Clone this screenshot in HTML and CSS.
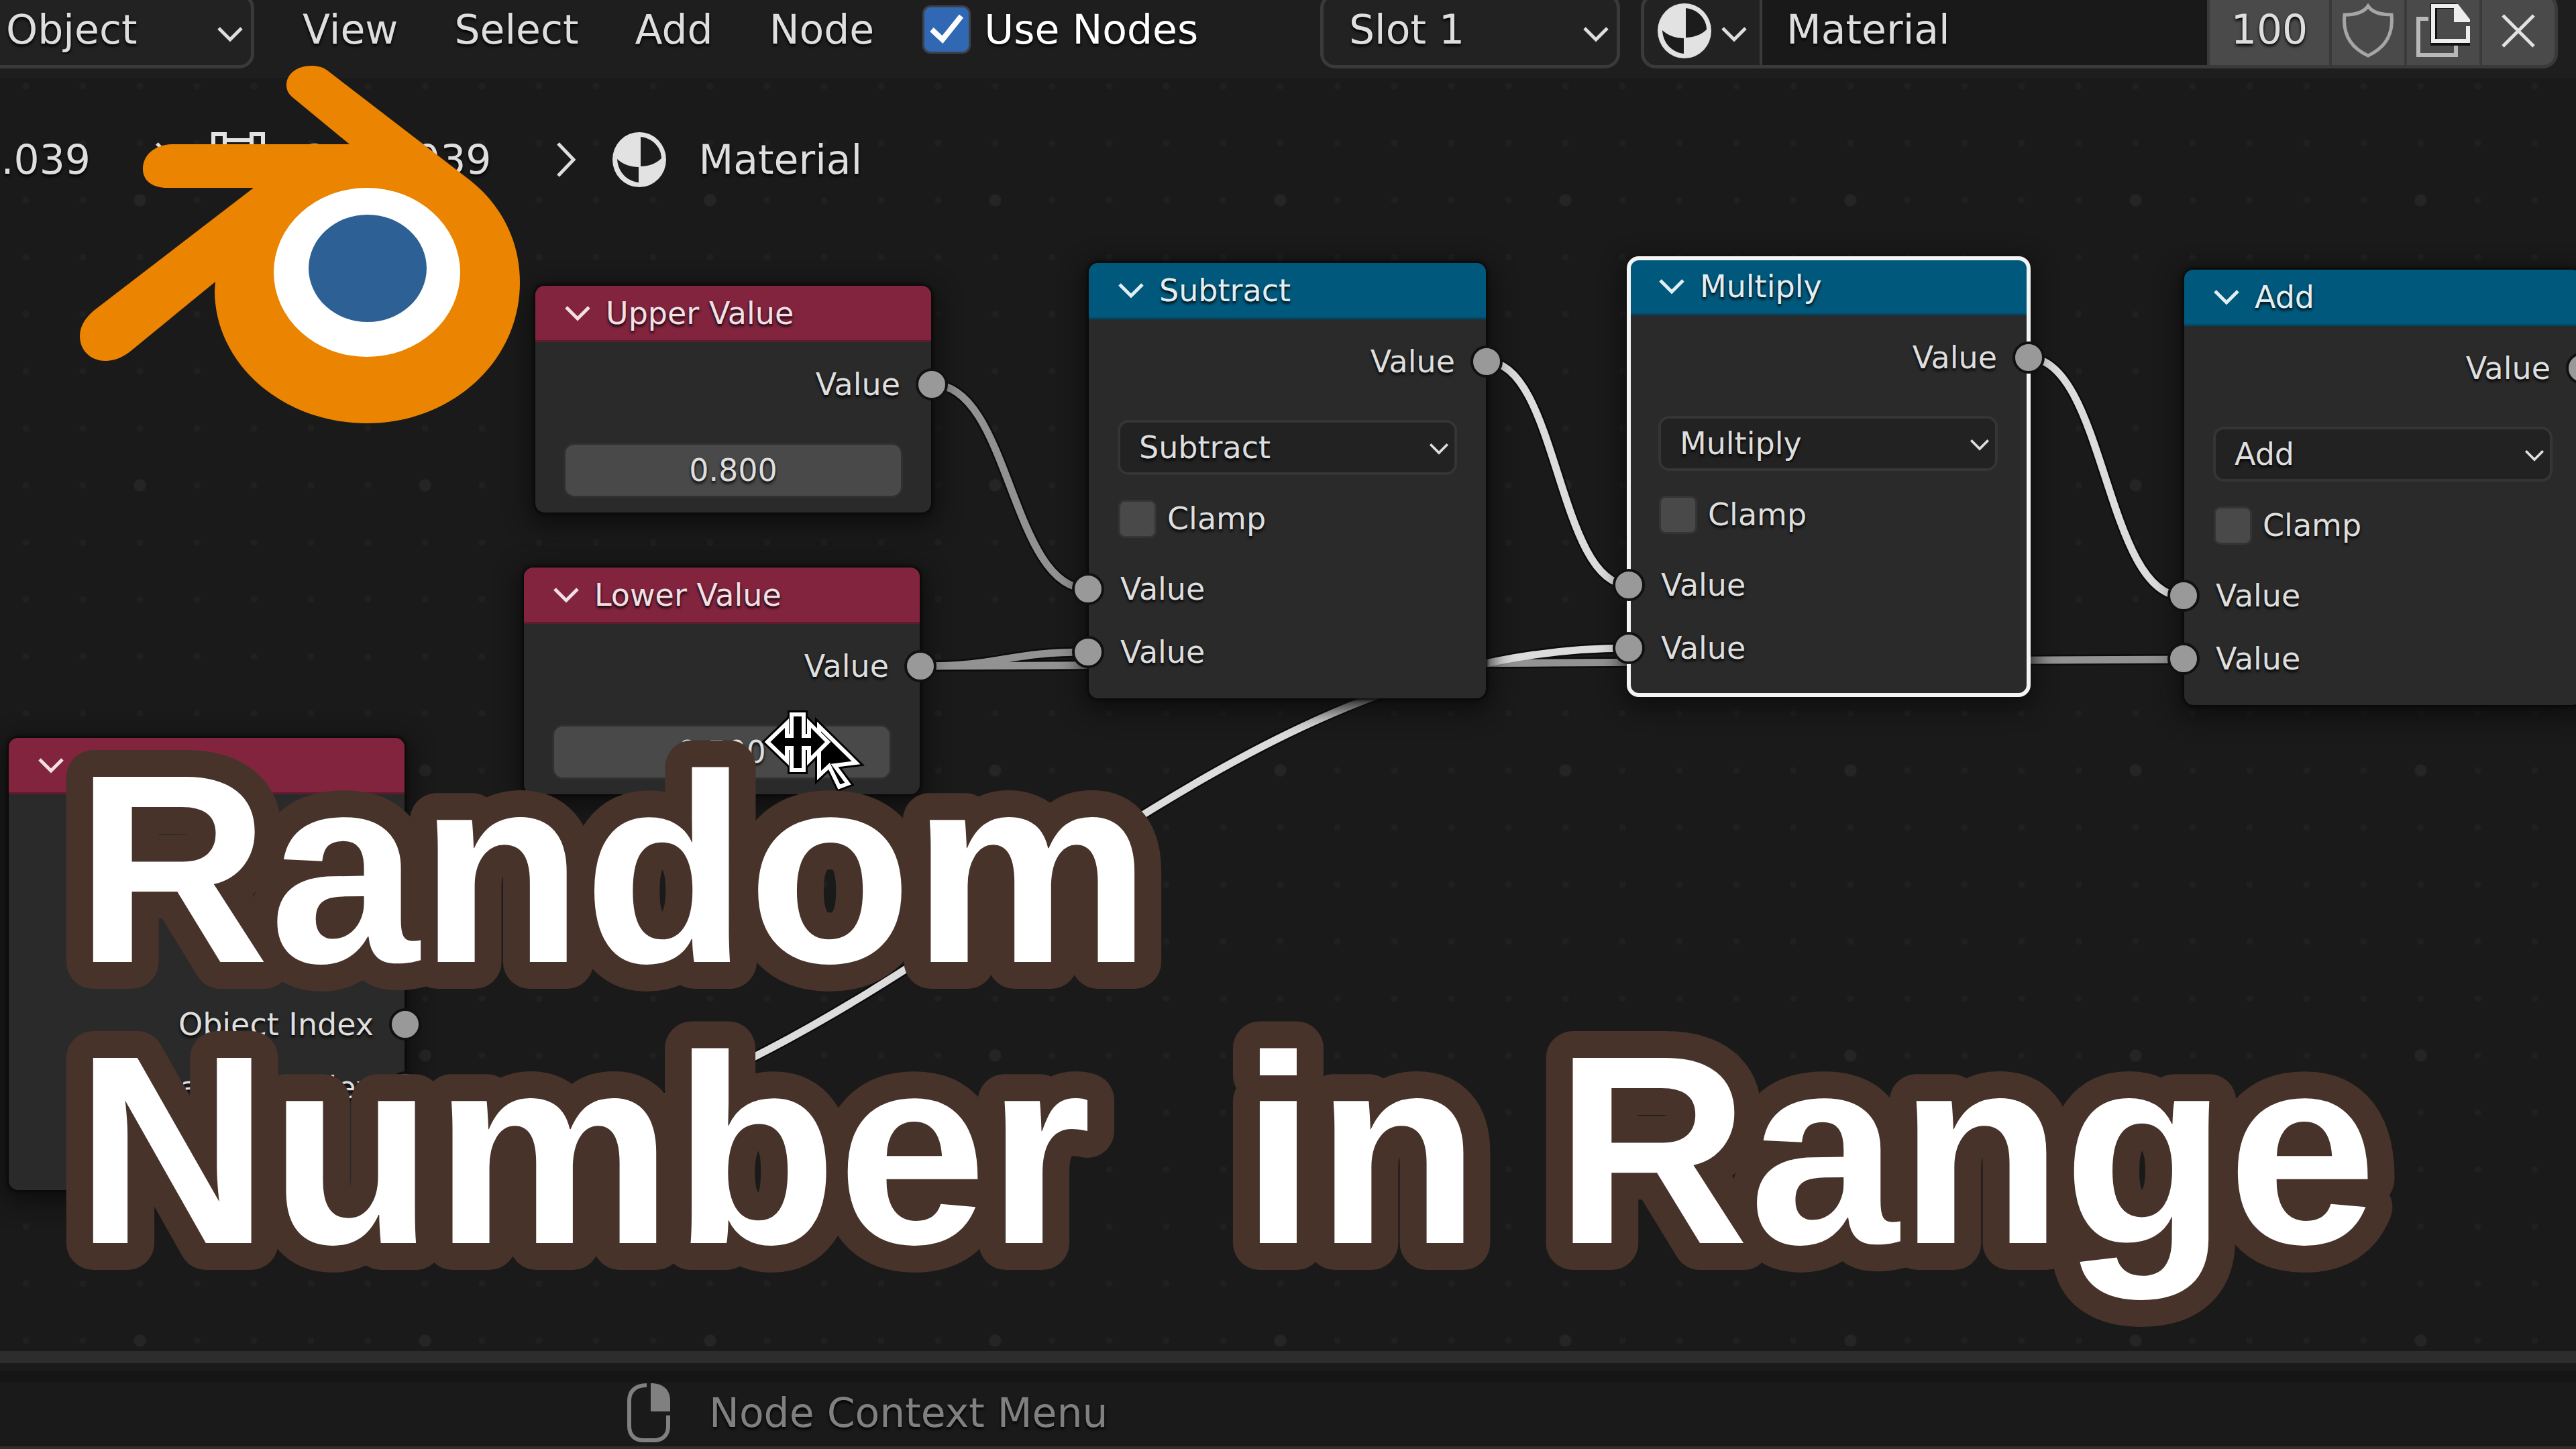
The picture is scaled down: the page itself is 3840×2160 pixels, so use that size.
FILE: index.html
```html
<!DOCTYPE html>
<html lang="en">
<head>
<meta charset="utf-8">
<title>Random Number in Range</title>
<link rel="stylesheet" href="styles.css">
</head>
<body>
<svg class="symbols" aria-hidden="true">
  <symbol id="chevron" viewBox="0 0 40 26"><path d="M3 4 L20 21 L37 4" fill="none" stroke="currentColor" stroke-width="5"/></symbol>
  <symbol id="arrow" viewBox="0 0 30 54"><path d="M3 3 L26 27 L3 51" fill="none" stroke="currentColor" stroke-width="5"/></symbol>
  <symbol id="sphere" viewBox="0 0 80 82">
    <ellipse cx="40" cy="41" rx="40" ry="41" fill="#e2e2e2"/>
    <path d="M42 7 C61 9 73 24 73 39 C65 47 54 51 42 51 Z M7 40 C15 48 27 52 39 52 V75 C21 73 8 59 7 40 Z" fill="#1c1c1c"/>
  </symbol>
</svg>

<main class="editor">
  <header class="toolbar">
    <div class="dropdown mode">
      <select aria-label="Shader type"><option>Object</option></select>
      <svg class="caret"><use href="#chevron"/></svg>
    </div>
    <nav class="menus">
      <button type="button">View</button>
      <button type="button">Select</button>
      <button type="button">Add</button>
      <button type="button">Node</button>
    </nav>
    <label class="use-nodes">
      <span class="tick">
        <input type="checkbox" checked>
        <svg viewBox="0 0 72 72"><path d="M14 36 L30 51 L58 16" fill="none" stroke="#fff" stroke-width="8"/></svg>
      </span>
      Use Nodes
    </label>
    <div class="dropdown slot">
      <select aria-label="Material slot"><option>Slot 1</option></select>
      <svg class="caret"><use href="#chevron"/></svg>
    </div>
    <div class="datablock">
      <button type="button" class="browse" aria-label="Browse material">
        <svg class="ball"><use href="#sphere"/></svg>
        <svg class="caret"><use href="#chevron"/></svg>
      </button>
      <input type="text" class="name" aria-label="Material name" value="Material">
      <button type="button" class="users">100</button>
      <button type="button" class="tool" aria-label="Fake user">
        <svg viewBox="0 0 80 82"><path d="M40 4 C34 13 20 17 5 17 C2 46 14 66 40 78 C66 66 78 46 75 17 C60 17 46 13 40 4 Z" fill="none" stroke="#a6a6a6" stroke-width="5"/></svg>
      </button>
      <button type="button" class="tool" aria-label="New material">
        <svg viewBox="0 0 80 82"><path d="M18 23 H3 V77 H59 V62" fill="none" stroke="#b8b8b8" stroke-width="6"/><path d="M80 34 V58 H26 V3 H60" fill="none" stroke="#111" stroke-width="10"/><path d="M77 34 V56 H25 V4 H60" fill="none" stroke="#ededed" stroke-width="6"/><path d="M56 1 H62 L80 24 V28 H56 Z" fill="#ededed"/></svg>
      </button>
      <button type="button" class="tool" aria-label="Unlink material">
        <svg viewBox="0 0 80 82"><path d="M17 18 L63 64 M63 18 L17 64" fill="none" stroke="#e2e2e2" stroke-width="5"/></svg>
      </button>
    </div>
  </header>

  <section class="canvas">
    <svg class="links">
      <g transform="translate(0 -116)" fill="none">
        <g stroke="#0c0c0c" stroke-width="16">
          <path d="M1373 993 C2095 993 2532 983 3254 983"/>
          <path d="M1373 993 C1497 993 1498 972 1622 972"/>
          <path d="M1390 573 C1506 573 1506 878 1622 878"/>
          <path d="M596 1715 C1296 1715 1722 966 2428 966"/>
          <path d="M2216 539 C2322 539 2322 872 2428 872"/>
          <path d="M3023 533 C3138 533 3138 889 3254 889"/>
        </g>
        <g stroke="#929292" stroke-width="11">
          <path d="M1373 993 C2095 993 2532 983 3254 983"/>
          <path d="M1373 993 C1497 993 1498 972 1622 972"/>
          <path d="M1390 573 C1506 573 1506 878 1622 878"/>
        </g>
        <g stroke="#dcdcdc" stroke-width="11">
          <path d="M596 1715 C1296 1715 1722 966 2428 966"/>
          <path d="M2216 539 C2322 539 2322 872 2428 872"/>
          <path d="M3023 533 C3138 533 3138 889 3254 889"/>
        </g>
      </g>
    </svg>

    <ol class="breadcrumbs">
      <li class="clipped"><span>Cube.039</span></li>
      <li><svg class="step"><use href="#arrow"/></svg>
        <svg class="ball" viewBox="0 0 80 82"><path d="M20 12 H60 M20 70 H60 M11 22 V60 M69 22 V60 M3 3 H20 V22 H3 Z M60 3 H77 V22 H60 Z M3 60 H20 V79 H3 Z M60 60 H77 V79 H60 Z" fill="none" stroke="#e2e2e2" stroke-width="6"/></svg>
        <span>Cube.039</span></li>
      <li><svg class="step"><use href="#arrow"/></svg><svg class="ball"><use href="#sphere"/></svg><span>Material</span></li>
    </ol>

    <article class="node input-node upper">
      <h2><svg class="fold"><use href="#chevron"/></svg>Upper Value</h2>
      <div class="row out">Value<i class="socket"></i></div>
      <input type="text" class="number" aria-label="Upper value" value="0.800">
    </article>

    <article class="node input-node lower">
      <h2><svg class="fold"><use href="#chevron"/></svg>Lower Value</h2>
      <div class="row out">Value<i class="socket"></i></div>
      <input type="text" class="number" aria-label="Lower value" value="0.500">
    </article>

    <article class="node input-node info">
      <h2><svg class="fold"><use href="#chevron"/></svg></h2>
      <div class="row out">Object Index<i class="socket"></i></div>
      <div class="row out">Material Index<i class="socket"></i></div>
    </article>

    <article class="node subtract">
      <h2><svg class="fold"><use href="#chevron"/></svg>Subtract</h2>
      <div class="row out">Value<i class="socket"></i></div>
      <div class="dropdown operation"><select aria-label="Operation"><option>Subtract</option></select><svg class="caret"><use href="#chevron"/></svg></div>
      <label class="row clamp"><input type="checkbox">Clamp</label>
      <div class="row in">Value<i class="socket"></i></div>
      <div class="row in">Value<i class="socket"></i></div>
    </article>

    <article class="node multiply">
      <h2><svg class="fold"><use href="#chevron"/></svg>Multiply</h2>
      <div class="row out">Value<i class="socket"></i></div>
      <div class="dropdown operation"><select aria-label="Operation"><option>Multiply</option></select><svg class="caret"><use href="#chevron"/></svg></div>
      <label class="row clamp"><input type="checkbox">Clamp</label>
      <div class="row in">Value<i class="socket"></i></div>
      <div class="row in">Value<i class="socket"></i></div>
    </article>

    <article class="node add">
      <h2><svg class="fold"><use href="#chevron"/></svg>Add</h2>
      <div class="row out">Value<i class="socket"></i></div>
      <div class="dropdown operation"><select aria-label="Operation"><option>Add</option></select><svg class="caret"><use href="#chevron"/></svg></div>
      <label class="row clamp"><input type="checkbox">Clamp</label>
      <div class="row in">Value<i class="socket"></i></div>
      <div class="row in">Value<i class="socket"></i></div>
    </article>

    <svg class="pointer" viewBox="1130 1050 160 136" aria-hidden="true">
      <g fill="#000" stroke="#000" stroke-width="12">
        <path d="M1221 1083 L1276 1137 L1244 1141 L1264 1168 L1251 1173 L1236 1142 L1221 1156 Z"/>
        <path d="M1144 1106 L1173 1078 V1097 H1180 V1065 H1198 V1097 H1206 V1078 L1234 1106 L1206 1134 V1115 H1198 V1148 H1180 V1115 H1173 V1134 Z"/>
      </g>
      <g fill="#000" stroke="#fff" stroke-width="6">
        <path d="M1221 1083 L1276 1137 L1244 1141 L1264 1168 L1251 1173 L1236 1142 L1221 1156 Z"/>
        <path d="M1144 1106 L1173 1078 V1097 H1180 V1065 H1198 V1097 H1206 V1078 L1234 1106 L1206 1134 V1115 H1198 V1148 H1180 V1115 H1173 V1134 Z"/>
      </g>
    </svg>
  </section>

  <svg class="logo" viewBox="110 90 680 550" role="img" aria-label="Blender">
    <path fill="#eb8400" d="M488 105 L631 215 L701 269 C748 306 775 360 775 421 C775 540 672 631 547 631 C422 631 320 543 320 433 L321 420 L194 524 C182 533 170 538 157 538 C136 538 119 523 119 501 C119 484 130 470 145 459 L378 280 H249 C228 280 213 270 213 252 C213 230 232 215 258 215 H521 L436 145 C430 140 427 134 427 127 C427 110 443 98 464 98 C474 98 481 100 488 105 Z"/>
    <ellipse cx="547" cy="406" rx="139" ry="126" fill="#fff"/>
    <ellipse cx="548" cy="400" rx="88" ry="80" fill="#2d6094"/>
  </svg>

  <h1 class="headline">
    <svg>
      <text x="0" y="350">Random</text>
      <text x="0" y="769">Number  in Range</text>
    </svg>
  </h1>
</main>

<footer class="status">
  <svg viewBox="0 0 64 88" aria-hidden="true"><path d="M29 3 C12 3 3 12 3 26 V64 C3 78 12 85 24 85 H40 C52 85 61 78 61 64 V48" fill="none" stroke="#808080" stroke-width="6"/><path d="M35 0 C54 0 64 10 64 26 V42 H35 Z" fill="#808080"/></svg>
  <span>Node Context Menu</span>
</footer>
</body>
</html>
```

FILE: styles.css
```css
* { box-sizing: border-box; }

body {
  margin: 0;
  min-height: 100vh;
  display: flex;
  flex-direction: column;
  overflow: hidden;
  background: #1a1a1a;
  color: #dedede;
  font: 60px/72px "DejaVu Sans", sans-serif;
  text-shadow: 0 3px 4px #000;
}

button, input, select {
  margin: 0;
  padding: 0;
  border: 0;
  background: none;
  color: inherit;
  font: inherit;
  text-shadow: inherit;
  appearance: none;
}

svg { display: block; }

.symbols { position: absolute; width: 0; height: 0; }

.editor {
  position: relative;
  flex: 1;
  display: flex;
  flex-direction: column;
}

/* Toolbar */

.toolbar {
  height: 116px;
  padding: 0 27px 24px 0;
  display: flex;
  align-items: center;
  overflow: hidden;
  background: #1e1e1e;
}

.dropdown { display: grid; align-items: center; }
.dropdown > * { grid-area: 1 / 1; }
.dropdown select {
  width: 100%;
  height: 112px;
  padding: 0 38px 4px;
  border: 5px solid #3a3a3a;
  border-radius: 22px;
  background: #222;
}
.dropdown .caret { justify-self: end; margin: 10px 16px 0 0; pointer-events: none; }
.caret { width: 40px; height: 26px; }

.mode { width: 379px; }
.mode select { padding-left: 9px; border-left: 0; border-radius: 0 22px 22px 0; }

.menus { display: flex; gap: 84px; margin-left: 72px; padding-bottom: 4px; }

.use-nodes {
  display: flex;
  align-items: center;
  gap: 20px;
  margin-left: 72px;
  padding-bottom: 4px;
  color: #fff;
}
.tick { display: grid; width: 72px; height: 72px; }
.tick > * { grid-area: 1 / 1; width: 72px; height: 72px; }
.tick input { border: 3px solid #3d4148; border-radius: 12px; background: #3068b4; }
.tick svg { pointer-events: none; }

.slot { width: 447px; margin-left: auto; }

.datablock {
  display: flex;
  width: 1367px;
  height: 112px;
  margin-left: 31px;
  border: 5px solid #3a3a3a;
  border-radius: 22px;
  background: #4a4a4a;
  overflow: hidden;
}
.datablock > * + * { border-left: 4px solid #3a3a3a; }
.browse {
  width: 172px;
  display: flex;
  align-items: center;
  gap: 14px;
  padding-left: 20px;
  background: #222;
}
.browse .caret { margin-top: 10px; }
.ball { width: 80px; height: 82px; }
.name { flex: 1; min-width: 0; padding: 0 0 4px 36px; background: #191919; }
.users { width: 182px; padding-bottom: 4px; }
.tool { width: 112px; display: grid; place-items: center; }
.tool svg { width: 80px; height: 82px; }

/* Node canvas */

.canvas {
  position: relative;
  flex: 1;
  overflow: hidden;
  background-color: #1a1a1a;
  background-image:
    radial-gradient(circle, #252525 8px, transparent 10px),
    radial-gradient(circle, #202020 4px, transparent 6px);
  background-size: 425px 425px, 85px 85px;
  background-position: -4px -30px, -4px -30px;
}

.links { position: absolute; inset: 0; width: 100%; height: 100%; }

.breadcrumbs {
  position: relative;
  display: flex;
  gap: 96px;
  margin: 0;
  padding: 82px 0 0;
  list-style: none;
}
.breadcrumbs li { display: flex; align-items: center; height: 80px; }
.breadcrumbs .clipped { width: 135px; justify-content: flex-end; overflow: hidden; }
.step { width: 30px; height: 54px; }
.breadcrumbs .ball { margin: 0 49px 0 54px; }

.node {
  position: absolute;
  width: 592px;
  padding-bottom: 22px;
  border-radius: 14px;
  background: #2a2a2a;
  box-shadow: 0 0 4px 2px #080808, 0 10px 36px 6px #0d0d0d;
  font-size: 46px;
  line-height: 56px;
}
.node h2 {
  display: flex;
  align-items: center;
  gap: 22px;
  height: 84px;
  margin: 0 0 16px;
  padding-left: 43px;
  border-bottom: 3px solid #004a68;
  border-radius: 14px 14px 0 0;
  background: #00597c;
  color: #e2eef2;
  font-size: 46px;
  font-weight: 400;
}
.input-node { width: 590px; }
.input-node h2 { border-color: #5e1c30; background: #83243f; color: #f2e0e6; }
.fold { width: 40px; height: 26px; }

.row { position: relative; display: flex; align-items: center; height: 94px; }
.out { justify-content: flex-end; padding-right: 46px; }
.in { padding-left: 47px; }
.socket {
  position: absolute;
  width: 48px;
  height: 48px;
  border: 4px solid #111;
  border-radius: 50%;
  background: #999;
}
.out .socket { right: -25px; }
.in .socket { left: -25px; }

.number {
  display: block;
  width: 506px;
  height: 82px;
  margin: 40px 0 0 42px;
  border: 3px solid #303030;
  border-radius: 16px;
  background: #494949;
  text-align: center;
}

.operation { width: 506px; margin: 40px 0 18px 43px; }
.operation select { height: 82px; padding: 0 28px; border-width: 4px; border-color: #353535; border-radius: 16px; }
.operation .caret { width: 30px; height: 20px; margin: 4px 12px 0 0; }

.clamp { gap: 16px; margin-bottom: 11px; padding-left: 44px; }
.clamp input { width: 57px; height: 57px; border: 3px solid #353535; border-radius: 10px; background: #494949; }

.upper { left: 798px; top: 310px; }
.lower { left: 781px; top: 730px; }
.info { left: 13px; top: 984px; padding-bottom: 106px; }
.info h2 { margin-bottom: 296px; }
.subtract { left: 1623px; top: 276px; }
.multiply { left: 2429px; top: 270px; width: 594px; outline: 6px solid #f4f4f4; outline-offset: -2px; }
.add { left: 3256px; top: 286px; }

.pointer { position: absolute; left: 1130px; top: 934px; width: 160px; height: 136px; }

/* Artwork over the editor */

.logo { position: absolute; left: 110px; top: 90px; width: 680px; height: 550px; }

.headline {
  position: absolute;
  left: 112px;
  right: 0;
  top: 1084px;
  margin: 0;
  font: bold 401px/419px "Liberation Sans", sans-serif;
}
.headline svg { width: 100%; height: 838px; overflow: visible; }
.headline text {
  fill: #fff;
  stroke: #47332a;
  stroke-width: 80px;
  stroke-linejoin: round;
  paint-order: stroke fill;
  text-shadow: none;
  white-space: pre;
}

/* Status bar */

.status {
  display: flex;
  align-items: center;
  gap: 58px;
  height: 146px;
  padding: 12px 0 0 935px;
  border-top: 18px solid #2d2d2d;
  border-bottom: 4px solid #2d2d2d;
  background: linear-gradient(#1a1a1a 12px, #151515 12px, #151515 29px, #1a1a1a 29px);
  color: #808080;
}
.status svg { width: 64px; height: 88px; margin-top: 12px; }
.status span { margin-top: 12px; }
```
